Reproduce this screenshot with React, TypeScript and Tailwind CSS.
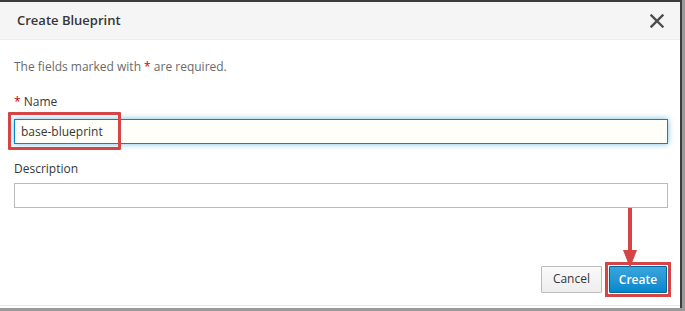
import React from "react";

export default function App() {
  return (
    <div className="w-[685px] h-[311px] bg-[#9a9a9a] relative overflow-hidden" style={{ fontFamily: '"Open Sans", "Noto Sans", sans-serif' }}>
      <div className="absolute left-0 top-0 w-[682px] h-[308px] bg-[#3c3c3c]" />
      <div className="relative w-[680px] h-[306px] mt-[2px] bg-white flex flex-col">
        {/* Header */}
        <div className="h-[38px] bg-[#f5f5f5] border-b border-[#ececec] flex items-center justify-between pl-[17px] pr-[15px]">
          <span className="text-[13px] font-semibold text-[#363636]">Create Blueprint</span>
          <svg width="14" height="14" viewBox="0 0 14 14" className="mr-[1px]">
            <path d="M1.5 1.5 L12.5 12.5 M12.5 1.5 L1.5 12.5" stroke="#4d4d4d" strokeWidth="2.4" strokeLinecap="square" />
          </svg>
        </div>
        {/* Body */}
        <div className="flex flex-col pl-[14px] pr-[12px] pt-[19px]">
          <p className="text-[12px] text-[#6a6a6a] leading-[16px]">
            The fields marked with <span className="text-[#cc0000]">*</span> are required.
          </p>
          <label className="mt-[19px] text-[12px] text-[#363636] leading-[16px]">
            <span className="text-[#cc0000]">*</span> Name
          </label>
          <div className="relative mt-[9px]">
            <div className="h-[25px] border border-[#0088ce] bg-[#fffef9] shadow-[0_0_6px_rgba(0,136,206,0.55)] flex items-center pl-[6px] text-[12px] text-[#363636]">
              base-blueprint
            </div>
            <div className="absolute left-[-6px] top-[-7px] w-[113px] h-[38px] border-[3px] border-[#d64545] rounded-[1px]" />
          </div>
          <label className="mt-[17px] text-[12px] text-[#363636] leading-[16px]">Description</label>
          <div className="mt-[6px] h-[25px] border border-[#bbbbbb] bg-white" />
        </div>
        {/* Footer */}
        <div className="flex-1" />
        <div className="flex justify-end items-center gap-[7px] pr-[13px] pb-[12px]">
          <button className="h-[27px] px-[11px] border border-[#bbbbbb] rounded-[1px] bg-gradient-to-b from-[#fafafa] to-[#ededed] text-[12px] text-[#363636]">
            Cancel
          </button>
          <div className="relative">
            <button className="h-[27px] w-[58px] border border-[#00659c] rounded-[1px] bg-gradient-to-b from-[#39a5dc] to-[#0088ce] text-[12px] font-semibold text-white">
              Create
            </button>
            <div className="absolute left-[-4px] top-[-4px] w-[66px] h-[35px] border-[3px] border-[#d64545]" />
          </div>
        </div>
        <div className="h-[1px] bg-[#e8e8e8] mb-[2px]" />
        {/* Arrow annotation */}
        <svg className="absolute left-[622px] top-[206px]" width="16" height="62" viewBox="0 0 16 62">
          <rect x="6" y="0" width="4" height="46" fill="#d64545" />
          <polygon points="1,42 15,42 8,60" fill="#d64545" />
        </svg>
      </div>
    </div>
  );
}
